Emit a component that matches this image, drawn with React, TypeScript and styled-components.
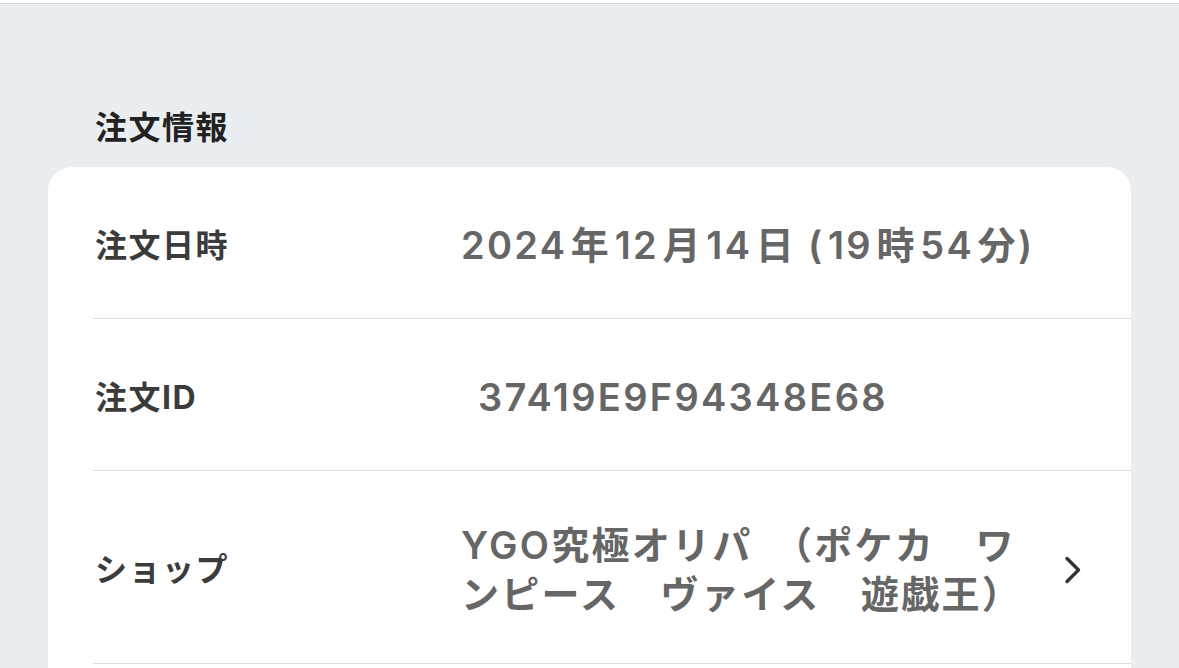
import React from 'react';
import styled, { createGlobalStyle } from 'styled-components';

const GlobalStyle = createGlobalStyle`
  html, body {
    margin: 0;
    padding: 0;
    background: #ebeef0;
    overflow: hidden;
  }
  body {
    font-family: Inter, "Noto Sans CJK JP", sans-serif;
  }
`;

const Page = styled.div`
  min-height: 668px;
  background: #ebeef0;
`;

const TopBar = styled.div`
  height: 3px;
  background: #ffffff;
  border-bottom: 1px solid #d4d6d8;
`;

const Main = styled.main`
  padding: 0 48px;
`;

const SectionTitle = styled.h2`
  margin: 100px 0 15px;
  padding-left: 47px;
  font-size: 32px;
  line-height: 48px;
  letter-spacing: 1.5px;
  font-weight: 700;
  color: #222222;
`;

const Card = styled.section`
  background: #ffffff;
  border-radius: 24px;
  min-height: 560px;
`;

const Row = styled.div`
  display: flex;
  align-items: center;
  box-sizing: border-box;
  min-height: 152px;
  margin-left: 45px;
  padding: 44px 0;
  border-bottom: 1px solid #dddddd;
`;

const Label = styled.div`
  flex: 0 0 368px;
  box-sizing: border-box;
  padding-left: 2px;
  font-size: 32px;
  letter-spacing: 1.5px;
  font-weight: 700;
  color: #3b3b3b;
`;

const Value = styled.div<{ $inset?: number }>`
  flex: 1;
  padding-top: 6px;
  padding-left: ${(p) => p.$inset ?? 0}px;
  font-size: 38px;
  line-height: 49px;
  letter-spacing: 2.3px;
  font-weight: 600;
  color: #666666;
`;

// digits set beside kanji get a little breathing room, like the native autospacing
const Num = styled.span`
  margin: 0 3.5px;

  &:first-child {
    margin-left: 0;
  }
`;

const Chevron = styled.div`
  flex: 0 0 20px;
  display: flex;
  justify-content: center;
  margin: 6px 48px 0 12px;
  color: #333333;
`;

interface InfoRow {
  label: string;
  value: string;
  inset?: number;
  spaced?: boolean;
  link?: boolean;
}

const rows: InfoRow[] = [
  { label: '注文日時', value: '2024年12月14日 (19時54分)', spaced: true },
  { label: '注文ID', value: '37419E9F94348E68', inset: 17 },
  { label: 'ショップ', value: 'YGO究極オリパ　（ポケカ　ワンピース　ヴァイス　遊戯王）', link: true },
];

const withSpacedDigits = (text: string) =>
  text.split(/(\d+)/).map((part, i) =>
    /^\d+$/.test(part) ? <Num key={i}>{part}</Num> : <React.Fragment key={i}>{part}</React.Fragment>
  );

const App: React.FC = () => {
  return (
    <Page>
      <GlobalStyle />
      <TopBar />
      <Main>
        <SectionTitle>注文情報</SectionTitle>
        <Card>
          {rows.map((row) => (
            <Row key={row.label}>
              <Label>{row.label}</Label>
              <Value $inset={row.inset}>{row.spaced ? withSpacedDigits(row.value) : row.value}</Value>
              {row.link && (
                <Chevron>
                  <svg width="20" height="30" viewBox="0 0 20 30" fill="none">
                    <path
                      d="M4 3.5 L15.5 15 L4 26.5"
                      stroke="currentColor"
                      strokeWidth="3.4"
                      strokeLinecap="round"
                      strokeLinejoin="round"
                    />
                  </svg>
                </Chevron>
              )}
            </Row>
          ))}
        </Card>
      </Main>
    </Page>
  );
};

export default App;
